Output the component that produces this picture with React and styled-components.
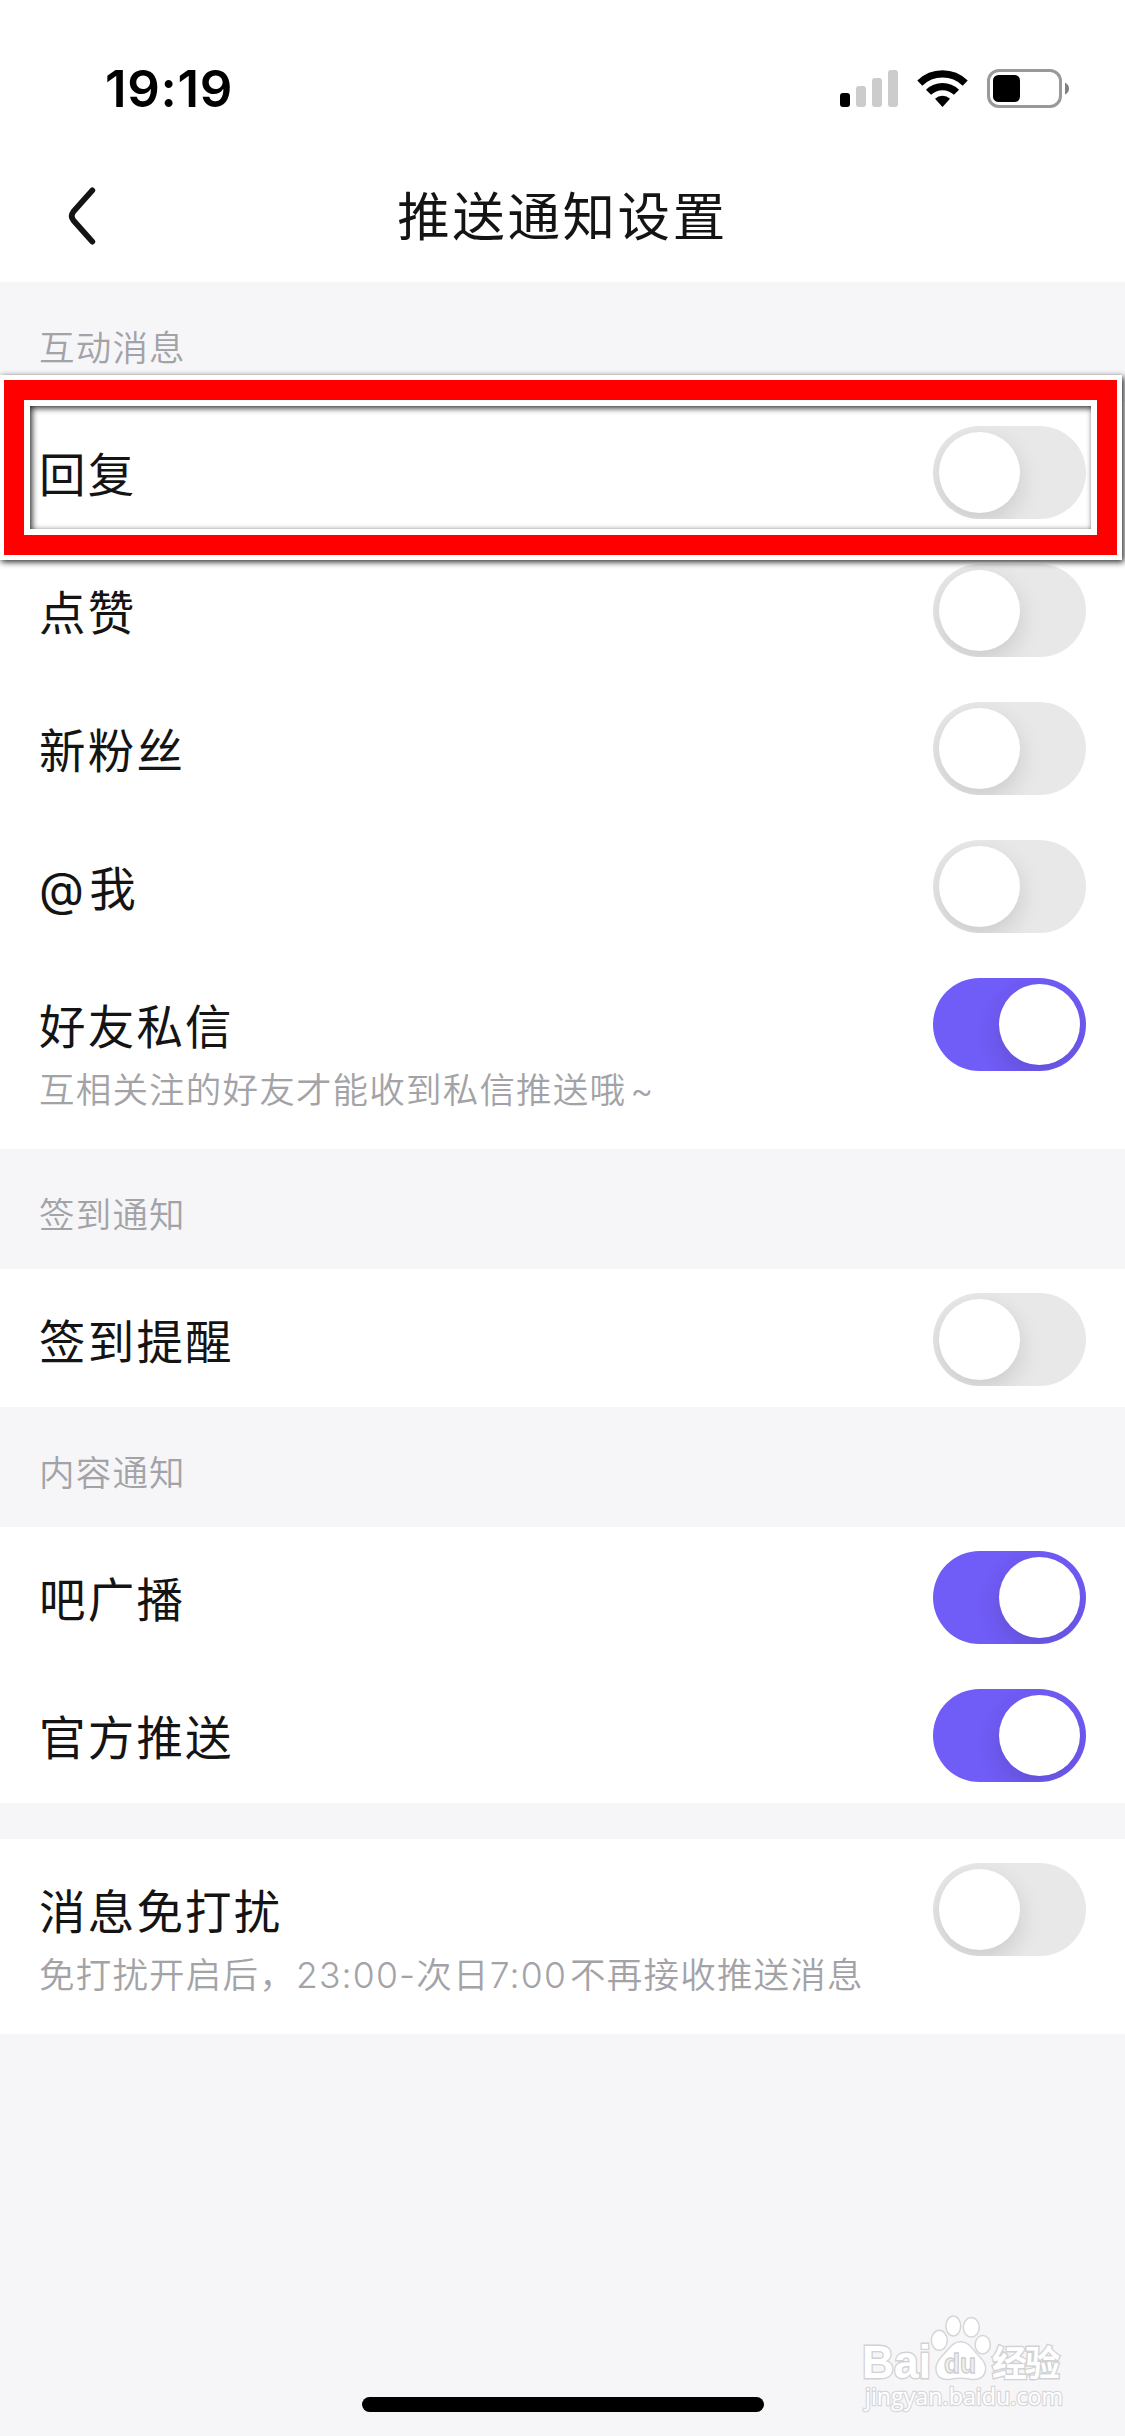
import React, { useState } from 'react';
import styled, { createGlobalStyle } from 'styled-components';

const StatusIcons = () => (
  <svg width="230" height="40" viewBox="0 0 230 40">
    <rect x="0" y="24" width="10" height="14" rx="3" fill="#000" />
    <rect x="16" y="17" width="10" height="21" rx="3" fill="#ccc" />
    <rect x="32" y="9" width="10" height="29" rx="3" fill="#ccc" />
    <rect x="48" y="1" width="10" height="37" rx="3" fill="#ccc" />
    <g fill="none" stroke="#000" strokeWidth="7.2">
      <path d="M79.8 14.1 A32.5 32.5 0 0 1 125.2 14.1" />
      <path d="M88.5 23.3 A20 20 0 0 1 116.5 23.3" />
    </g>
    <path d="M95 29.7 A10.8 10.8 0 0 1 110 29.7 L102.5 38 Z" fill="#000" />
    <rect x="148.5" y="1.5" width="72" height="36" rx="10.5" fill="none" stroke="#999" strokeWidth="3" />
    <rect x="153" y="6" width="27" height="27" rx="5.5" fill="#000" />
    <path d="M225 13.5 Q229 15.5 229 19.5 Q229 23.5 225 25.5 Z" fill="#808080" />
  </svg>
);

const Watermark = () => (
  <WatermarkSvg width="216" height="110" viewBox="0 0 216 110">
    <g fill="#fff" stroke="#d6d6d8" strokeWidth="1.5">
      <ellipse cx="84.3" cy="33.3" rx="8" ry="10" />
      <ellipse cx="98.3" cy="19" rx="7.4" ry="10" />
      <ellipse cx="116.3" cy="20.3" rx="8" ry="9.7" />
      <ellipse cx="127.7" cy="37.7" rx="7.6" ry="9.3" />
      <path d="M105.7 34.7 C114 34.7 117 42 123 48 C129 54 131.5 58 130.5 63.5 C129 72 121 73.5 114 72 C108 71 103 71 97 72 C90 73.5 82 72 81 63.5 C80 58 82 54 88 48 C94 42 97 34.7 105.7 34.7 Z" />
    </g>
    <g fill="#fff" stroke="#d2d2d4" strokeWidth="2.8" paintOrder="stroke" fontWeight="700">
      <text x="7" y="71" fontSize="46" fontFamily="Liberation Sans, sans-serif" textLength="69" lengthAdjust="spacingAndGlyphs">Bai</text>
      <text x="137" y="69" fontSize="35" fontFamily="Noto Sans CJK SC, sans-serif" textLength="68">经验</text>
    </g>
    <text x="89" y="66" fontSize="28" fontWeight="700" fontFamily="Liberation Sans, sans-serif" fill="#f1f1f2" stroke="#cfcfd1" strokeWidth="1.4" textLength="32" lengthAdjust="spacingAndGlyphs">du</text>
    <text x="10" y="98" fontSize="24" fontFamily="Open Sans, sans-serif" fill="#fff" stroke="#d8d8da" strokeWidth="2.6" paintOrder="stroke" textLength="198" lengthAdjust="spacingAndGlyphs">jingyan.baidu.com</text>
  </WatermarkSvg>
);

const App = () => {
  const [ enabled, setEnabled ] = useState(
    Object.fromEntries(sections.flatMap(({ rows }) => rows.map(({ id, on }) => [ id, on ])))
  );

  const toggle = id => setEnabled({ ...enabled, [id]: !enabled[id] });

  return (
    <Page>
      <GlobalStyle />
      <StatusBar>
        <Time>19:19</Time>
        <StatusIcons />
      </StatusBar>
      <NavBar>
        <BackButton aria-label="返回">
          <svg width="30" height="60" viewBox="0 0 30 60" fill="none" stroke="#141414" strokeWidth="5.8" strokeLinecap="round">
            <path d="M25.3 4.3 L6.4 25.7 Q3 30 6.4 34.3 L25.3 55.7" />
          </svg>
        </BackButton>
        <Title>推送通知设置</Title>
      </NavBar>
      {sections.map(({ title, rows }, idx) => (
        <section key={idx}>
          {title ? <SectionTitle>{title}</SectionTitle> : <Gap />}
          {rows.map(({ id, label, note, marked }) => (
            <Row key={id} $tall={!!note}>
              <div>
                <Label>{label}</Label>
                {note && <Note>{note}</Note>}
              </div>
              <Switch role="switch" aria-checked={enabled[id]} $on={enabled[id]} onClick={() => toggle(id)}>
                <Knob />
              </Switch>
              {marked && <Highlight />}
            </Row>
          ))}
        </section>
      ))}
      <Footer>
        <Watermark />
        <HomeIndicator />
      </Footer>
    </Page>
  );
};

const GlobalStyle = createGlobalStyle`
  body {
    margin: 0;
    background-color: #f6f6f9;
  }
`;

const Page = styled.div`
  display: flex;
  flex-direction: column;
  width: 1125px;
  height: 2436px;
  overflow: hidden;
  background-color: #f6f6f9;
  color: #141414;
  font-family: Inter, 'Noto Sans CJK SC', sans-serif;
`;

const StatusBar = styled.header`
  display: flex;
  align-items: flex-start;
  justify-content: space-between;
  box-sizing: border-box;
  height: 150px;
  padding: 69px 55px 0 105px;
  background-color: white;
`;

const Time = styled.div`
  font-size: 51px;
  font-weight: 600;
  line-height: 40px;
  letter-spacing: 0.7px;
  color: black;
`;

const NavBar = styled.nav`
  display: grid;
  grid-template-columns: 200px 1fr 200px;
  align-items: center;
  height: 132px;
  background-color: white;
`;

const BackButton = styled.button`
  display: flex;
  justify-self: start;
  margin-left: 67px;
  padding: 0;
  border: none;
  background: none;
`;

const Title = styled.h1`
  margin: 2px 0 0;
  font-size: 52.5px;
  font-weight: 400;
  line-height: 60px;
  letter-spacing: 2.6px;
  text-align: center;
`;

const SectionTitle = styled.h2`
  box-sizing: border-box;
  height: 120px;
  margin: 0;
  padding: 42px 39px 0;
  font-size: 35.5px;
  font-weight: 350;
  line-height: 50px;
  letter-spacing: 1.2px;
  color: #a3a3a7;
`;

const Gap = styled.div`
  height: 36px;
`;

const Row = styled.div`
  position: relative;
  display: flex;
  justify-content: space-between;
  box-sizing: border-box;
  height: ${({ $tall }) => $tall ? '195px' : '138px'};
  padding: 24px 39px 0;
  background-color: white;
`;

const Label = styled.div`
  margin-top: 19px;
  font-size: 46.5px;
  line-height: 60px;
  letter-spacing: 2.2px;
`;

const Mention = styled.span`
  margin-right: 3px;
`;

const Note = styled.div`
  margin-top: 9px;
  font-size: 35.5px;
  font-weight: 350;
  line-height: 50px;
  letter-spacing: 1.2px;
  color: #a3a3a7;
`;

const Tilde = styled.span`
  margin-left: 4px;
`;

const Clock = styled.span`
  margin-right: 3px;
`;

const Switch = styled.button`
  display: flex;
  justify-content: ${({ $on }) => $on ? 'flex-end' : 'flex-start'};
  box-sizing: border-box;
  width: 153px;
  height: 93px;
  padding: 6px;
  overflow: hidden;
  border: none;
  border-radius: 47px;
  background-color: ${({ $on }) => $on ? '#705cf6' : '#e8e8e8'};
`;

const Knob = styled.span`
  width: 81px;
  height: 81px;
  border-radius: 50%;
  background-color: white;
  box-shadow: 0 9px 24px rgba(0, 0, 0, 0.13);
`;

const Highlight = styled.div`
  position: absolute;
  z-index: 1;
  top: -22px;
  left: 4px;
  box-sizing: border-box;
  width: 1113px;
  height: 175px;
  border: 20px solid #f00;
  outline: 5px solid white;
  filter: drop-shadow(2px 2px 3px rgba(0, 0, 0, 0.85));
  pointer-events: none;
  &:after {
    content: "";
    position: absolute;
    inset: 0;
    border: 6px solid white;
  }
`;

const Footer = styled.footer`
  position: relative;
  display: flex;
  flex: 1;
  align-items: flex-end;
  justify-content: center;
  padding-bottom: 24px;
`;

const WatermarkSvg = styled.svg`
  position: absolute;
  right: 54px;
  bottom: 19px;
`;

const HomeIndicator = styled.div`
  width: 402px;
  height: 15px;
  border-radius: 8px;
  background-color: black;
`;

const sections = [
  {
    title: '互动消息',
    rows: [
      { id: 'reply', label: '回复', on: false, marked: true },
      { id: 'like', label: '点赞', on: false },
      { id: 'fans', label: '新粉丝', on: false },
      { id: 'at', label: <><Mention>@</Mention>我</>, on: false },
      { id: 'dm', label: '好友私信', note: <>互相关注的好友才能收到私信推送哦<Tilde>~</Tilde></>, on: true }
    ]
  },
  {
    title: '签到通知',
    rows: [{ id: 'sign', label: '签到提醒', on: false }]
  },
  {
    title: '内容通知',
    rows: [
      { id: 'broadcast', label: '吧广播', on: true },
      { id: 'official', label: '官方推送', on: true }
    ]
  },
  {
    rows: [
      { id: 'dnd', label: '消息免打扰', note: <>免打扰开启后，23:00-次日<Clock>7:00</Clock>不再接收推送消息</>, on: false }
    ]
  }
];

export default App;
